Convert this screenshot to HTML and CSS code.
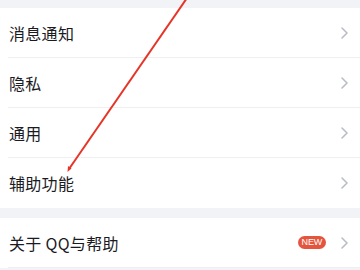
FILE: index.html
```html
<!DOCTYPE html>
<html lang="zh">
<head>
<meta charset="utf-8">
<link rel="stylesheet" href="styles.css">
</head>
<body>
<div class="page">
  <div class="gap-top"></div>
  <div class="group">
    <div class="row"><span class="label">消息通知</span><span class="right"><svg class="chev" width="7" height="12" viewBox="0 0 7 12"><path d="M1 1 L6 6 L1 11" fill="none" stroke="#b9bdc5" stroke-width="1.6" stroke-linecap="round" stroke-linejoin="round"/></svg></span></div>
    <div class="row"><span class="label">隐私</span><span class="right"><svg class="chev" width="7" height="12" viewBox="0 0 7 12"><path d="M1 1 L6 6 L1 11" fill="none" stroke="#b9bdc5" stroke-width="1.6" stroke-linecap="round" stroke-linejoin="round"/></svg></span></div>
    <div class="row"><span class="label">通用</span><span class="right"><svg class="chev" width="7" height="12" viewBox="0 0 7 12"><path d="M1 1 L6 6 L1 11" fill="none" stroke="#b9bdc5" stroke-width="1.6" stroke-linecap="round" stroke-linejoin="round"/></svg></span></div>
    <div class="row last"><span class="label">辅助功能</span><span class="right"><svg class="chev" width="7" height="12" viewBox="0 0 7 12"><path d="M1 1 L6 6 L1 11" fill="none" stroke="#b9bdc5" stroke-width="1.6" stroke-linecap="round" stroke-linejoin="round"/></svg></span></div>
  </div>
  <div class="gap-mid"></div>
  <div class="group">
    <div class="row"><span class="label">关于 QQ与帮助</span><span class="right"><span class="badge">NEW</span><svg class="chev" width="7" height="12" viewBox="0 0 7 12"><path d="M1 1 L6 6 L1 11" fill="none" stroke="#b9bdc5" stroke-width="1.6" stroke-linecap="round" stroke-linejoin="round"/></svg></span></div>
  </div>
  <svg class="annot" width="360" height="270" viewBox="0 0 360 270">
    <line x1="187" y1="-2" x2="69" y2="169" stroke="#e53528" stroke-width="2"/>
    <polygon points="67.5,172 68,166 71.5,168.5" fill="#e53528"/>
  </svg>
</div>
</body>
</html>
```

FILE: styles.css
```css
html, body {
  margin: 0;
  padding: 0;
}
body {
  background: #f2f3f7;
  font-family: "Noto Sans CJK SC", "Noto Sans", sans-serif;
  width: 360px;
  height: 270px;
  overflow: hidden;
}
.page {
  position: relative;
  width: 360px;
  height: 270px;
}
.gap-top {
  height: 8px;
}
.gap-mid {
  height: 10px;
}
.group {
  background: #ffffff;
}
.row {
  height: 50px;
  margin-left: 8px;
  box-sizing: border-box;
  border-bottom: 1px solid #efeff2;
  display: flex;
  align-items: center;
  justify-content: space-between;
}
.row.last {
  border-bottom: none;
}
.label {
  font-size: 16px;
  color: #1b1b1f;
  padding-left: 1px;
  letter-spacing: 0.3px;
}
.right {
  display: flex;
  align-items: center;
  gap: 15px;
  padding-right: 12px;
}
.chev {
  display: block;
}
.badge {
  background: #e5553e;
  color: #ffffff;
  font-family: "Liberation Sans", Arial, sans-serif;
  font-size: 9px;
  line-height: 13px;
  height: 13px;
  padding: 0 4px;
  border-radius: 7px;
  text-align: center;
  letter-spacing: -0.2px;
}
.annot {
  position: absolute;
  left: 0;
  top: 0;
  pointer-events: none;
}
```
